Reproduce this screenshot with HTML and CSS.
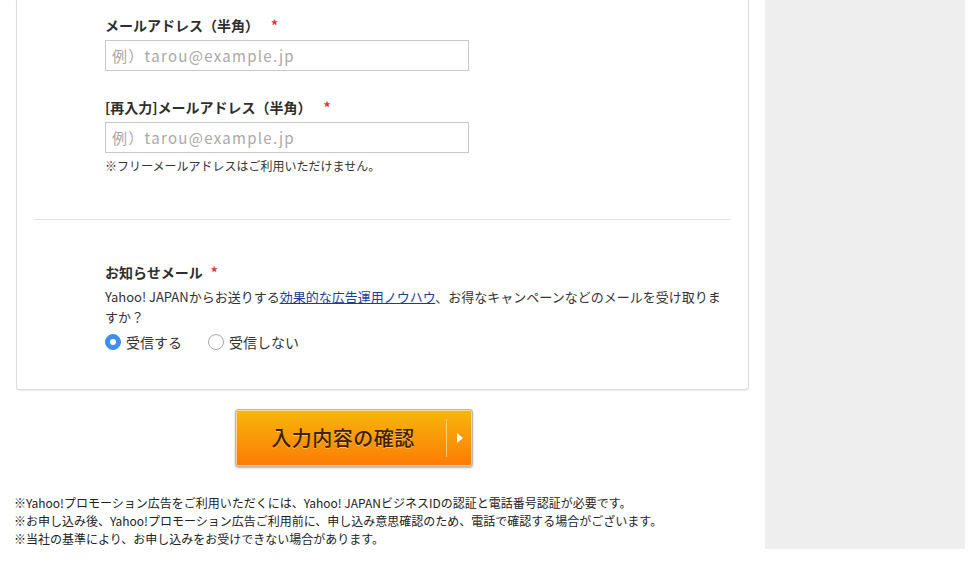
FILE: index.html
```html
<!DOCTYPE html>
<html lang="ja">
<head>
<meta charset="utf-8">
<title>お申し込みフォーム</title>
<link rel="stylesheet" href="styles.css">
</head>
<body>
<div class="page">
  <main class="main">
    <div class="card">
      <section class="section section-fields">
        <div class="field">
          <div class="label">メールアドレス（半角）<span class="req">*</span></div>
          <input class="text-input" type="text" placeholder="例）tarou@example.jp">
        </div>
        <div class="field field-next">
          <div class="label">[再入力]メールアドレス（半角）<span class="req">*</span></div>
          <input class="text-input" type="text" placeholder="例）tarou@example.jp">
          <p class="hint">※フリーメールアドレスはご利用いただけません。</p>
        </div>
      </section>
      <hr class="divider">
      <section class="section section-news">
        <div class="label">お知らせメール<span class="req req-near">*</span></div>
        <p class="desc">Yahoo! JAPANからお送りする<a class="link" href="#">効果的な広告運用ノウハウ</a>、お得なキャンペーンなどのメールを受け取りますか？</p>
        <div class="radios">
          <label class="radio"><span class="dot dot-on"></span><span class="radio-text">受信する</span></label>
          <label class="radio"><span class="dot"></span><span class="radio-text">受信しない</span></label>
        </div>
      </section>
    </div>
    <div class="actions">
      <button class="submit" type="button"><span class="submit-text">入力内容の確認</span><span class="submit-arrow"><span class="tri"></span></span></button>
    </div>
    <div class="notes">
      <p>※Yahoo!プロモーション広告をご利用いただくには、Yahoo! JAPANビジネスIDの認証と電話番号認証が必要です。</p>
      <p>※お申し込み後、Yahoo!プロモーション広告ご利用前に、申し込み意思確認のため、電話で確認する場合がございます。</p>
      <p>※当社の基準により、お申し込みをお受けできない場合があります。</p>
    </div>
  </main>
  <aside class="side"></aside>
</div>
</body>
</html>
```

FILE: styles.css
```css
* { box-sizing: border-box; }
html, body { margin: 0; padding: 0; background: #fff; }
body {
  font-family: "Noto Sans CJK JP", "Noto Sans", sans-serif;
  color: #333;
}
p { margin: 0; }

.page {
  display: flex;
  align-items: stretch;
  width: 965px;
}
.main {
  width: 749px;
  padding-left: 14px;
  padding-bottom: 1px;
}
.side {
  width: 200px;
  margin-left: 16px;
  background: #eeeeee;
}

.card {
  margin-left: 2px;
  background: #fff;
  border: 1px solid #dcdcdc;
  border-top: 0;
  border-radius: 0 0 4px 4px;
  box-shadow: 0 1px 1px rgba(0,0,0,0.08);
}
.section { padding-left: 88px; padding-right: 16px; }
.section-fields { padding-top: 15px; padding-bottom: 44px; }
.section-news { padding-top: 42px; padding-bottom: 37px; }

.label {
  font-size: 14px;
  line-height: 20px;
  font-weight: bold;
  color: #2e2e2e;
  margin-bottom: 5px;
}
.req {
  color: #e0333a;
  font-weight: bold;
  margin-left: 12px;
}
.req-near { margin-left: 8px; }
.field-next { margin-top: 26px; }

.text-input {
  display: block;
  width: 364px;
  height: 31px;
  margin: 0;
  border: 1px solid #c8c8c8;
  border-radius: 0;
  padding: 0 6px;
  font-family: "Noto Sans CJK JP", "Noto Sans", sans-serif;
  font-size: 15px;
  letter-spacing: 1.3px;
  color: #333;
  background: #fff;
  outline: none;
}
.text-input::placeholder { color: #a9a9a9; }

.hint {
  margin-top: 4px;
  font-size: 12px;
  line-height: 18px;
  color: #333;
}

.divider {
  margin: 0 17px;
  border: 0;
  border-top: 1px solid #e3e3e3;
  height: 0;
}

.desc {
  font-size: 13px;
  line-height: 20px;
  color: #333;
}
.link { color: #1b3c9d; text-decoration: underline; }

.radios {
  display: flex;
  gap: 26px;
  margin-top: 5px;
  height: 20px;
  align-items: center;
}
.radio {
  display: flex;
  align-items: center;
  gap: 5px;
  font-size: 14px;
  line-height: 20px;
  color: #333;
}
.dot {
  width: 16px;
  height: 16px;
  border-radius: 50%;
  border: 1px solid #a8a8a8;
  background: #fff;
  display: flex;
  align-items: center;
  justify-content: center;
}
.dot-on {
  border-color: #3a8ded;
  background: #3d90f0;
}
.dot-on::after {
  content: "";
  width: 6px;
  height: 6px;
  border-radius: 50%;
  background: #fff;
}

.actions {
  padding-left: 221px;
  margin-top: 19px;
}
.submit {
  display: flex;
  align-items: stretch;
  width: 238px;
  height: 58px;
  padding: 0;
  border: 1px solid #b9b9b9;
  border-radius: 3px;
  background: linear-gradient(#f6b70b, #fc7b05);
  box-shadow: inset 0 0 0 1px rgba(255,255,255,0.55), 0 1px 2px rgba(0,0,0,0.3);
  cursor: pointer;
  font-family: "Noto Sans CJK JP", "Noto Sans", sans-serif;
}
.submit-text {
  flex: 1;
  display: flex;
  align-items: center;
  justify-content: center;
  font-size: 20px;
  font-weight: 500;
  letter-spacing: 0.5px;
  color: #3f2100;
  text-shadow: 0 1px 0 rgba(255,230,150,0.6);
  padding-left: 4px;
  padding-bottom: 2px;
}
.submit-arrow {
  width: 26px;
  margin: 9px 0;
  border-left: 1px solid rgba(255,225,160,0.7);
  display: flex;
  align-items: center;
  justify-content: center;
}
.tri {
  width: 0;
  height: 0;
  border-top: 5px solid transparent;
  border-bottom: 5px solid transparent;
  border-left: 6px solid #fff;
}

.notes {
  margin-top: 27px;
  font-size: 12px;
  line-height: 18px;
  color: #222;
}
```
